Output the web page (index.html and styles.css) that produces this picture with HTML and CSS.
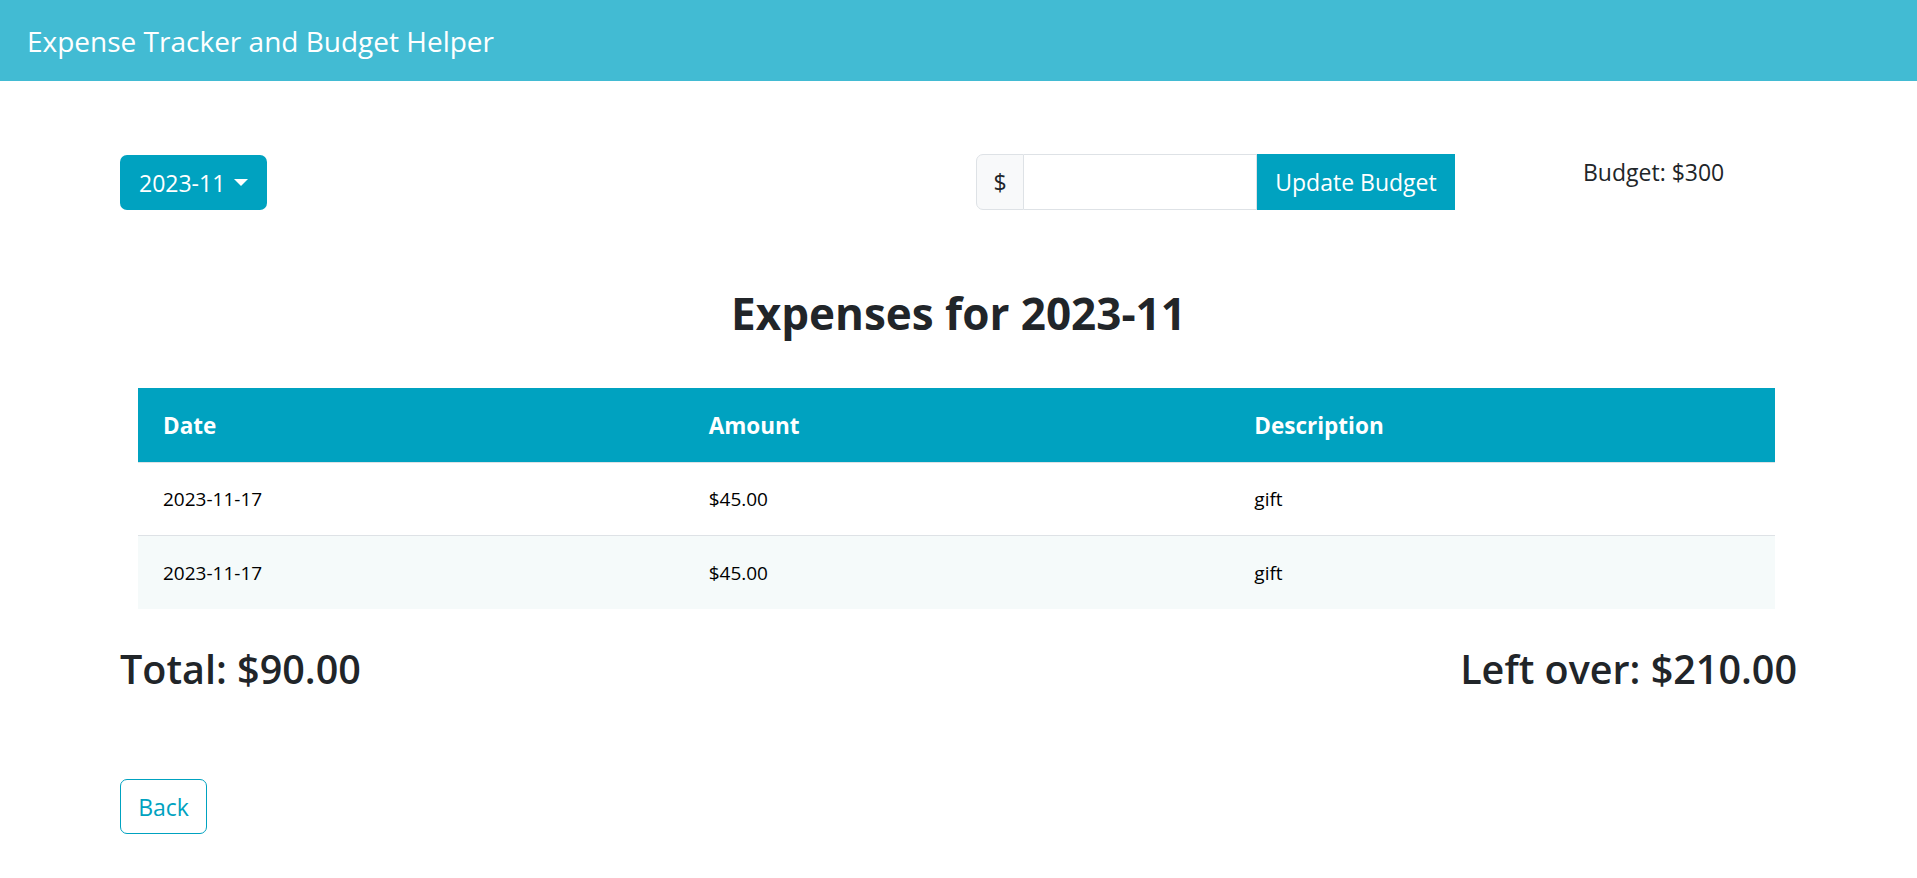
FILE: index.html
```html
<!DOCTYPE html>
<html lang="en">
<head>
<meta charset="utf-8">
<title>Expense Tracker and Budget Helper</title>
<link rel="stylesheet" href="styles.css">
</head>
<body>
<header class="navbar">
  <span class="brand">Expense Tracker and Budget Helper</span>
</header>
<main class="container">
  <div class="controls">
    <div class="col-month">
      <button class="btn btn-info dropdown" type="button">2023-11<span class="caret"></span></button>
    </div>
    <div class="input-group">
      <span class="addon">$</span>
      <input class="form-input" type="text">
      <button class="btn btn-info ig-btn" type="button">Update Budget</button>
    </div>
    <div class="budget">Budget: $300</div>
  </div>
  <h2 class="title">Expenses for 2023-11</h2>
  <div class="table-wrap">
    <table class="expenses">
      <thead>
        <tr><th>Date</th><th>Amount</th><th>Description</th></tr>
      </thead>
      <tbody>
        <tr><td>2023-11-17</td><td>$45.00</td><td>gift</td></tr>
        <tr class="striped"><td>2023-11-17</td><td>$45.00</td><td>gift</td></tr>
      </tbody>
    </table>
  </div>
  <div class="totals">
    <h3 class="total">Total: $90.00</h3>
    <h3 class="total">Left over: $210.00</h3>
  </div>
  <button class="btn btn-outline" type="button">Back</button>
</main>
</body>
</html>
```

FILE: styles.css
```css
* { box-sizing: border-box; }
body {
  margin: 0;
  font-family: "Open Sans", "Noto Sans", sans-serif;
  color: #212529;
  background: #fff;
}
.navbar {
  height: 81px;
  background: #42bbd3;
  display: flex;
  align-items: center;
  padding-left: 27px;
}
.brand {
  color: #fff;
  font-size: 28px;
}
.container {
  padding: 0 120px;
}
.controls {
  display: flex;
  align-items: flex-start;
  margin-top: 73px;
}
.col-month { width: 856px; }
.btn {
  font-family: inherit;
  cursor: pointer;
}
.btn-info {
  background: #00a2c0;
  color: #fff;
  border: none;
}
.dropdown {
  height: 55px;
  margin-top: 1px;
  padding: 0 19px;
  border-radius: 7px;
  font-size: 23px;
  display: inline-flex;
  align-items: center;
  gap: 9px;
}
.caret {
  width: 0;
  height: 0;
  border-left: 7px solid transparent;
  border-right: 7px solid transparent;
  border-top: 7px solid #fff;
}
.input-group {
  display: flex;
  height: 56px;
}
.addon {
  width: 48px;
  display: flex;
  align-items: center;
  justify-content: center;
  background: #f8f9fa;
  border: 1px solid #dee2e6;
  border-radius: 7px 0 0 7px;
  font-size: 23px;
  color: #212529;
}
.form-input {
  width: 233px;
  border: 1px solid #dee2e6;
  border-left: none;
  margin: 0;
  font-size: 23px;
  outline: none;
}
.ig-btn {
  width: 198px;
  font-size: 23px;
  padding: 0;
}
.budget {
  margin-left: 128px;
  font-size: 23px;
  line-height: 36px;
}
.title {
  text-align: center;
  font-size: 44px;
  font-weight: 700;
  margin: 77px 0 0;
  line-height: 1.2;
}
.table-wrap {
  margin: 48px 22px 0 18px;
}
.expenses {
  width: 100%;
  border-collapse: collapse;
  table-layout: fixed;
  font-size: 19px;
}
.expenses th {
  background: #00a2c0;
  color: #fff;
  text-align: left;
  font-weight: 700;
  font-size: 22.5px;
  height: 75px;
  padding: 0 25px;
  border-bottom: 1px solid #dee2e6;
}
.expenses td {
  height: 73px;
  padding: 0 25px;
  color: #000;
  border-bottom: 1px solid #dee2e6;
}
.expenses tbody tr:last-child td { border-bottom: none; }
.expenses tr.striped td { background: #f5fafa; }
.totals {
  display: flex;
  justify-content: space-between;
  margin-top: 37px;
}
.total {
  font-size: 39.5px;
  font-weight: 600;
  margin: 0;
  line-height: 1.2;
}
.btn-outline {
  margin-top: 86px;
  height: 55px;
  width: 87px;
  background: #fff;
  color: #00a2c0;
  border: 1.5px solid #00a2c0;
  border-radius: 7px;
  font-size: 23px;
  padding: 0;
}
```
